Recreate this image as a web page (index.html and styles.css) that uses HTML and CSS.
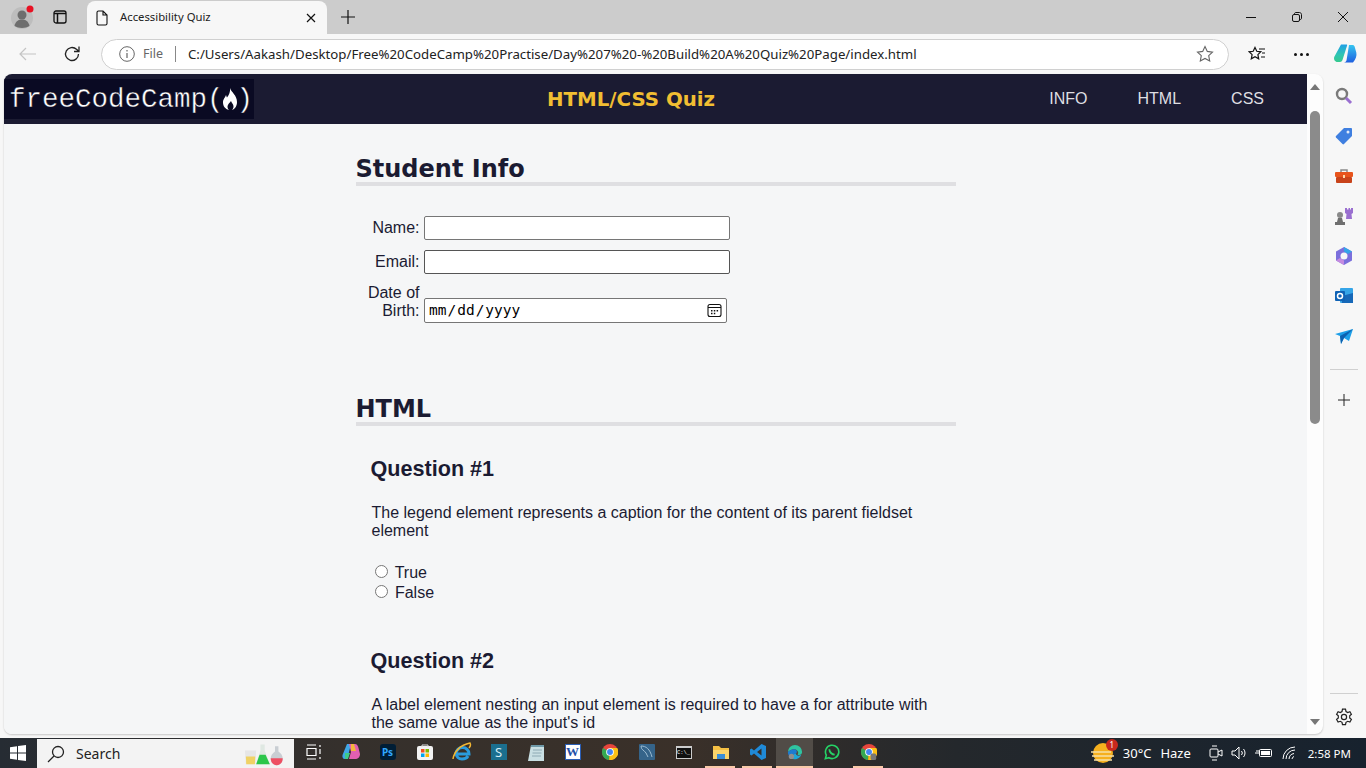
FILE: index.html
```html
<!DOCTYPE html>
<html lang="en">
<head>
    <meta charset="UTF-8">
    <title>Accessibility Quiz</title>
    <link rel="stylesheet" href="styles.css">
</head>
<body>
    <!-- tab strip -->
    <div class="tabstrip">
        <div class="profile">
            <svg width="26" height="26" viewBox="0 0 26 26"><circle cx="11" cy="14" r="11" fill="#bdbdbd"/><circle cx="11" cy="11" r="4.500" fill="#6e6e6e"/><path d="M3.500 22c1-5 4-6.500 7.500-6.500s6.500 1.500 7.500 6.500c-4 2.500-11 2.500-15 0z" fill="#6e6e6e"/><circle cx="19" cy="5" r="3.500" fill="#e81123"/></svg>
        </div>
        <div class="tab-actions">
            <svg width="14" height="14" viewBox="0 0 14 14" fill="none" stroke="#111" stroke-width="1.300"><rect x="1" y="1" width="12" height="12" rx="2"/><path d="M1 3.500h12M4.500 3.500V13" stroke-width="1.500"/></svg>
        </div>
        <div class="tab">
            <svg width="12" height="16" viewBox="0 0 12 16" fill="none" stroke="#111" stroke-width="1.100"><path d="M1 2.500c0-1 .5-1.500 1.500-1.500H7l4 4v8.500c0 1-.5 1.500-1.500 1.500h-7c-1 0-1.500-.5-1.500-1.500zM7 1v4h4"/></svg>
            <span class="tab-title">Accessibility Quiz</span>
            <svg class="tab-close" width="10" height="10" viewBox="0 0 10 10" stroke="#111" stroke-width="1.200"><path d="M1 1l8 8M9 1l-8 8"/></svg>
        </div>
        <svg class="new-tab" width="14" height="14" viewBox="0 0 14 14" stroke="#111" stroke-width="1.200"><path d="M7 0v14M0 7h14"/></svg>
        <div class="window-controls">
            <svg width="10" height="10" viewBox="0 0 10 10" stroke="#111"><path d="M0 5.500h10"/></svg>
            <svg width="10" height="10" viewBox="0 0 10 10" fill="none" stroke="#111"><rect x=".5" y="2.500" width="7" height="7" rx="1.500"/><path d="M2.500 2.500V2c0-1 .5-1.500 1.500-1.500h3.500c1 0 2 1 2 2V6c0 1-.5 1.500-1.500 1.500"/></svg>
            <svg width="10" height="10" viewBox="0 0 10 10" stroke="#111"><path d="M0 0l10 10M10 0L0 10"/></svg>
        </div>
    </div>

    <!-- address bar -->
    <div class="toolbar">
        <svg class="tool-back" width="18" height="14" viewBox="0 0 18 14" fill="none" stroke="#c4c4c4" stroke-width="1.200"><path d="M17 7H1M7 1L1 7l6 6"/></svg>
        <svg class="tool-reload" width="18" height="18" viewBox="0 0 18 18" fill="none" stroke="#222" stroke-width="1.300"><path d="M15.500 9a6.500 6.500 0 1 1-2-4.700L16 6.500M16 1.500v5h-5"/></svg>
        <div class="address">
            <svg width="16" height="16" viewBox="0 0 16 16" fill="none" stroke="#666"><circle cx="8" cy="8" r="7.300"/><path d="M8 7v5M8 4v1.500" stroke-width="1.200"/></svg>
            <span class="address-file">File</span>
            <span class="address-url">C:/Users/Aakash/Desktop/Free%20CodeCamp%20Practise/Day%207%20-%20Build%20A%20Quiz%20Page/index.html</span>
            <svg class="address-star" width="18" height="18" viewBox="0 0 18 18" fill="none" stroke="#666" stroke-width="1.100"><path d="M9 1.500l2.300 4.900 5.200.7-3.800 3.600 1 5.300L9 13.400l-4.700 2.600 1-5.300L1.500 7.100l5.200-.7z"/></svg>
        </div>
        <svg class="tool-fav" width="18" height="16" viewBox="0 0 18 16" fill="none" stroke="#111" stroke-width="1.200"><path d="M7 1.500l1.800 3.800 4 .5-2.900 2.800.8 4.200L7 10.800l-3.700 2 .8-4.200L1.200 5.800l4-.5zM11 3h6M14 7h3M13 11h4"/></svg>
        <div class="tool-dots"><i></i><i></i><i></i></div>
        <svg class="tool-copilot" width="24" height="24" viewBox="0 0 24 24"><defs><linearGradient id="cpa" x1="0" y1="0" x2="0" y2="1"><stop offset="0" stop-color="#1f9fe6"/><stop offset=".6" stop-color="#2fc6b0"/><stop offset="1" stop-color="#36c98e"/></linearGradient><linearGradient id="cpb" x1="0" y1="0" x2="0" y2="1"><stop offset="0" stop-color="#35c5f0"/><stop offset="1" stop-color="#1f5fe0"/></linearGradient></defs><path d="M8 2.500h5.500c.5 0 .8.4.6 1L9.500 18c-.4 1.300-1.500 2-2.500 2H4.500C2 20 .5 17.500 1.200 15z" fill="url(#cpa)"/><path d="M16 3h3.500c1 0 1.800.7 2.100 1.500l1.700 6c.7 3-.5 7-3.300 10H11c1 0 2-.7 2.500-2z" fill="url(#cpb)"/></svg>
    </div>

    <div class="browser-main">
        <div class="page-frame">
            <div class="page">
                <header class="quiz-header">
                    <div class="logo">
                        <span>freeCodeCamp(</span>
                        <svg width="16" height="24" viewBox="0 0 16 24"><path d="M8 1c1 4 7 7 7 14 0 4-2 7-5 8 1.500-1.500 2-3.500 1-5.500-.5-1-1.500-2-2-3.500-1 1.500-3.500 3.500-3.500 5.500 0 1.500.5 2.500 1.500 3.500C3 22 1 19 1 15.500 1 12 3 11 4 8c.5 1 .5 2 1 2.500C7 8 8.500 5 8 1z" fill="#fff"/></svg>
                        <span class="logo-close">)</span>
                    </div>
                    <h1 class="quiz-title">HTML/CSS Quiz</h1>
                    <nav class="quiz-nav">
                        <a>INFO</a>
                        <a>HTML</a>
                        <a>CSS</a>
                    </nav>
                </header>

                <main class="quiz">
                    <section class="student-info">
                        <h2>Student Info</h2>
                        <div class="info-rows">
                            <div class="info-row"><label>Name:</label> <input type="text" class="text-input"></div>
                            <div class="info-row"><label>Email:</label> <input type="text" class="text-input dark"></div>
                            <div class="info-row"><label>Date of Birth:</label> <input type="date" class="date-input"></div>
                        </div>
                    </section>

                    <section class="html-section">
                        <h2>HTML</h2>
                        <div class="question">
                            <h3>Question #1</h3>
                            <p>The legend element represents a caption for the content of its parent fieldset element</p>
                            <div class="answers">
                                <label><input type="radio" name="q1"> True</label>
                                <label><input type="radio" name="q1"> False</label>
                            </div>
                        </div>
                        <div class="question">
                            <h3>Question #2</h3>
                            <p>A label element nesting an input element is required to have a for attribute with the same value as the input's id</p>
                        </div>
                    </section>
                </main>
            </div>
            <div class="scrollbar">
                <span class="arrow-up"></span>
                <span class="thumb"></span>
                <span class="arrow-down"></span>
            </div>
        </div>

        <!-- edge sidebar -->
        <aside class="sidebar">
            <div class="side-icon"><svg width="18" height="18" viewBox="0 0 18 18" fill="none"><circle cx="7" cy="7" r="5" stroke="#7a7a7a" stroke-width="2.400"/><path d="M11 11l5 5" stroke="#9a6fd0" stroke-width="3"/></svg></div>
            <div class="side-icon"><svg width="18" height="18" viewBox="0 0 18 18"><path d="M1 9l8-8h7c.5 0 1 .5 1 1v7l-8 8c-.5.500-1 .5-1.500 0L1 10.500C.5 10 .5 9.500 1 9z" fill="#3f7fe0"/><circle cx="13" cy="5" r="1.500" fill="#dfe9fa"/></svg></div>
            <div class="side-icon"><svg width="18" height="16" viewBox="0 0 18 16"><path d="M6 4V2h6v2" fill="none" stroke="#8a8a8a" stroke-width="1.500"/><rect x="0" y="4" width="18" height="5" rx="1" fill="#e8541c"/><rect x="1" y="9" width="16" height="6" rx="1" fill="#c8431a"/><rect x="8" y="7" width="2" height="3" fill="#ffd9a8"/></svg></div>
            <div class="side-icon"><svg width="20" height="20" viewBox="0 0 20 20"><circle cx="6" cy="9" r="3" fill="#8a8a8a"/><path d="M4 12h4l1 4H3zM1 16h10v3H1z" fill="#6f6f6f"/><path d="M11 2h2v1.500h1.500V2h1.500v1.500h1V2H19v5l-1.500 1 .5 5h-6l.5-5L11 7z" fill="#9a6fd0"/></svg></div>
            <div class="side-icon"><svg width="18" height="20" viewBox="0 0 18 20"><path d="M9 1l8 4.500v9L9 19l-8-4.500v-9z" fill="#7b6fdc"/><path d="M9 1l8 4.500-4 2.500-4-2.500z" fill="#35a5e8"/><path d="M1 14.500l4-2.500 4 2.500L9 19z" fill="#c58be0"/><circle cx="9" cy="10" r="3.500" fill="#f7f7f7"/></svg></div>
            <div class="side-icon"><svg width="18" height="18" viewBox="0 0 18 18"><rect x="5" y="1" width="13" height="15" rx="1" fill="#35a5e8"/><path d="M7 9l11-3v10H7z" fill="#1668b8"/><rect x="0" y="4" width="10" height="10" rx="1" fill="#0f62b5"/><circle cx="5" cy="9" r="2.500" fill="none" stroke="#fff" stroke-width="1.500"/></svg></div>
            <div class="side-icon"><svg width="18" height="15" viewBox="0 0 18 15"><path d="M0 5l18-5-4 12-5-3-3 6-1-8z" fill="#1d9fe8"/><path d="M5 7l13-7-9 9-3 6z" fill="#0d62b0"/></svg></div>
            <div class="side-rule"></div>
            <div class="side-icon add"><svg width="12" height="12" viewBox="0 0 12 12" stroke="#222"><path d="M6 0v12M0 6h12"/></svg></div>
            <div class="side-bottom">
                <div class="side-rule"></div>
                <svg width="18" height="18" viewBox="0 0 18 18" fill="none" stroke="#222" stroke-width="1.200"><circle cx="9" cy="9" r="2.600"/><path d="M7.500 1.200h3l.5 2.300 1.700 1 2.200-.8 1.500 2.600-1.700 1.500v2.200l1.700 1.500-1.500 2.600-2.200-.8-1.700 1-.5 2.300h-3l-.5-2.300-1.700-1-2.200.8-1.500-2.600 1.700-1.500V7.800L1.600 6.300l1.500-2.600 2.200.8 1.700-1z"/></svg>
            </div>
        </aside>
    </div>

    <!-- windows taskbar -->
    <footer class="taskbar">
        <div class="start">
            <svg width="16" height="16" viewBox="0 0 16 16" fill="#fff"><path d="M0 2.200l7-1v6.300H0zM8 1l8-1v7.500H8zM0 8.500h7v6.300l-7-1zM8 8.500h8V16l-8-1z"/></svg>
        </div>
        <div class="search-box">
            <svg width="18" height="18" viewBox="0 0 18 18" fill="none" stroke="#222" stroke-width="1.300"><circle cx="11" cy="7" r="5.500"/><path d="M7 11l-6 6"/></svg>
            <span>Search</span>
            <svg class="flasks" width="46" height="24" viewBox="0 0 46 28"><path d="M2 10h13l-1 16H3z" fill="#e6e6e6"/><path d="M3 17h11l-.5 9H3.500z" fill="#f0d264"/><path d="M20 3h5v7l6 16H15l5-16z" fill="#dfe8e2"/><path d="M19 15h7l5 11H15z" fill="#2cc64a"/><path d="M37 5h4v6c3 2 5 5 5 8 0 5-3 8-7 8s-7-3-7-8c0-3 2-6 5-8z" fill="#c9ced3"/><path d="M32 19h14c0 5-3 8-7 8s-7-3-7-8z" fill="#ee4f63"/></svg>
        </div>
        <div class="task-icons">
            <div class="task-icon"><svg width="16" height="16" viewBox="0 0 16 16" fill="none" stroke="#fff" stroke-width="1.200"><path d="M1 1h9M1 4.500h9v7H1zM1 15h9M14 1v2M14 5v5M14 13v2"/></svg></div>
            <div class="task-icon"><svg width="18" height="18" viewBox="0 0 18 18"><path d="M5 1h4L6 13c-.5 2-2 3-3.500 3C1 16 0 14 .5 12z" fill="#3fa7e8"/><path d="M7 1h6c2 0 3 2 3.500 4L18 11c0 3-2 5-5 5H7l2-7z" fill="#e25fb0"/><path d="M9 1h3l2 7H9z" fill="#f5b53d"/><path d="M3 10h5l-2 6H3z" fill="#3ecb8a"/></svg></div>
            <div class="task-icon"><div class="ps-tile">Ps</div></div>
            <div class="task-icon"><svg width="16" height="16" viewBox="0 0 16 16"><rect y="2" width="16" height="14" rx="2" fill="#f2f2f2"/><path d="M5 3V1h6v2" fill="none" stroke="#ddd"/><rect x="4" y="5" width="3.500" height="3.500" fill="#f25022"/><rect x="8.500" y="5" width="3.500" height="3.500" fill="#7fba00"/><rect x="4" y="9.500" width="3.500" height="3.500" fill="#00a4ef"/><rect x="8.500" y="9.500" width="3.500" height="3.500" fill="#ffb900"/></svg></div>
            <div class="task-icon"><svg width="20" height="20" viewBox="0 0 20 20"><path d="M4 12a6.500 6.500 0 0 1 13 0H4zM4 10c0 5 3 7 6 7 3 0 5-1 6-3" fill="none" stroke="#2a9bdd" stroke-width="3"/><path d="M1 17C2 10 8 3 18 1c1 2 0 4-1 5" fill="none" stroke="#f3b632" stroke-width="1.500"/></svg></div>
            <div class="task-icon"><div class="s-tile">S</div></div>
            <div class="task-icon"><svg width="16" height="18" viewBox="0 0 16 18"><path d="M3 2h13v16H0z" fill="#c9dfe3"/><path d="M3 2h13v2H3z" fill="#6f99a8"/><path d="M5 7h9M4.500 10h9M4 13h9" stroke="#8eaab4"/></svg></div>
            <div class="task-icon"><div class="word-tile">W</div></div>
            <div class="task-icon"><svg width="16" height="16" viewBox="0 0 20 20"><circle cx="10" cy="10" r="10" fill="#e8453c"/><path d="M10 10L1.300 5a10 10 0 0 0 7.700 15z" fill="#34a853"/><path d="M10 5h9a10 10 0 0 1-10 15z" fill="#fbc116"/><circle cx="10" cy="10" r="4.800" fill="#fff"/><circle cx="10" cy="10" r="3.700" fill="#4285f4"/></svg></div>
            <div class="task-icon"><svg width="16" height="16" viewBox="0 0 16 16"><rect width="16" height="16" rx="1" fill="#35648a"/><path d="M2 2c5 0 9 3 11 11M2 2c0 4 3 4 5 7 1 1 1 3 2 4" fill="none" stroke="#9cbbd1"/></svg></div>
            <div class="task-icon"><div class="cmd-tile">C:\_</div></div>
            <div class="task-icon"><svg width="16" height="14" viewBox="0 0 16 14"><path d="M0 1h6l2 2h8v11H0z" fill="#f5c044"/><path d="M0 5h16v9H0z" fill="#fbd56b"/><rect x="4" y="9" width="8" height="5" fill="#3a8fd8"/></svg></div>
            <div class="task-icon"><svg width="16" height="16" viewBox="0 0 16 16"><path d="M11.500 0L16 2v12l-4.500 2L4 9.500 1.500 11.500 0 10.500V5.500l1.500-1L4 6.500zM11.500 4.500L7 8l4.500 3.500z" fill="#1f8ad8" fill-rule="evenodd"/></svg></div>
            <div class="task-icon active"><svg width="16" height="16" viewBox="0 0 18 18"><path d="M1 9a8 8 0 0 1 16 0c0 3-3 4-5 3 2-3-1-6-4-6-3 0-6 2-7 3z" fill="#2fc4a0"/><path d="M1 9c1-1 4-3 7-3 3 0 4 3 2 5-2 0-5 2-3 6-3-1-6-4-6-8z" fill="#1d7bd0"/><path d="M7 17c-2-4 1-6 3-6 0 2 3 3 6 1-1 3-5 6-9 5z" fill="#1da7d8"/><circle cx="5" cy="14" r="3" fill="#8f8f8f"/></svg></div>
            <div class="task-icon"><svg width="16" height="16" viewBox="0 0 18 18" fill="none" stroke="#25d366" stroke-width="1.800"><path d="M1.500 16.500l1.100-4A7.500 7.500 0 1 1 5.500 15.400z"/><path d="M6 6c0 3 3 6 6 6" stroke-width="2"/></svg></div>
            <div class="task-icon"><svg width="16" height="16" viewBox="0 0 20 20"><circle cx="10" cy="10" r="10" fill="#e8453c"/><path d="M10 10L1.300 5a10 10 0 0 0 7.700 15z" fill="#34a853"/><path d="M10 5h9a10 10 0 0 1-10 15z" fill="#fbc116"/><circle cx="10" cy="10" r="4.800" fill="#fff"/><circle cx="10" cy="10" r="3.700" fill="#4285f4"/><rect x="12" y="12" width="7" height="8" rx="2" fill="#777"/></svg></div>
        </div>
        <div class="tray">
            <div class="weather-icon">
                <svg width="24" height="22" viewBox="0 0 24 22"><circle cx="12" cy="11" r="10" fill="#f6b01e"/><path d="M0 10h20M1 14h22M3 18h18" stroke="#f6dfa6" stroke-width="1.500"/></svg>
                <span class="weather-badge">1</span>
            </div>
            <span class="weather-temp">30°C</span>
            <span class="weather-text">Haze</span>
            <svg class="tray-icon cam" width="14" height="18" viewBox="0 0 14 18" fill="none" stroke="#fff"><rect x="1" y="5" width="8" height="8" rx="1"/><path d="M9 8l4-2v6l-4-2M3 2h5M3 16h5"/></svg>
            <svg class="tray-icon" width="16" height="14" viewBox="0 0 16 14" fill="none" stroke="#fff"><path d="M1 5h3l4-4v12L4 9H1zM10.500 5a3 3 0 0 1 0 4M12.500 3a6 6 0 0 1 0 8"/></svg>
            <svg class="tray-icon" width="18" height="10" viewBox="0 0 18 10" fill="none" stroke="#fff"><rect x="4.500" y="1.500" width="12" height="7" rx="1"/><rect x="6" y="3" width="9" height="4" fill="#fff" stroke="none"/><path d="M0 5h4M2 2v2M4 2v2"/></svg>
            <svg class="tray-icon wifi" width="14" height="14" viewBox="0 0 14 14" fill="none" stroke="#fff"><path d="M1 13A12 12 0 0 1 13 1M4 13a9 9 0 0 1 9-9M7 13a6 6 0 0 1 5-5.500M10 13a3 3 0 0 1 2-2.500"/></svg>
            <span class="clock">2:58 PM</span>
        </div>
    </footer>
</body>
</html>
```

FILE: styles.css
```css
* {
    box-sizing: border-box;
}

html,
body {
    margin: 0;
    height: 768px;
    overflow: hidden;
}

body {
    display: flex;
    flex-direction: column;
    font-family: "Liberation Sans", Arial, sans-serif;
    font-size: 16px;
    color: #1b1b32;
    background-color: #f7f7f7;
}

/* tab strip */
.tabstrip {
    display: flex;
    align-items: center;
    height: 34px;
    flex: none;
    background-color: #cccccc;
    font-family: "Noto Sans", sans-serif;
}

.profile {
    display: flex;
    width: 46px;
    padding-left: 11px;
    margin-top: -1px;
}

.tab-actions {
    display: flex;
    justify-content: center;
    width: 28px;
    margin-right: 13px;
}

.tab {
    display: flex;
    align-items: center;
    align-self: flex-end;
    width: 240px;
    height: 33px;
    padding: 0 11px 0 9px;
    background-color: #f7f7f7;
    border-radius: 8px 8px 0 0;
}

.tab-title {
    margin-left: 12px;
    padding-bottom: 2px;
    font-size: 11.300px;
    color: #222;
}

.tab-close {
    margin-left: auto;
}

.new-tab {
    margin-left: 14px;
}

.window-controls {
    display: flex;
    gap: 36px;
    margin-left: auto;
    padding-right: 18px;
}

/* toolbar */
.toolbar {
    display: flex;
    align-items: center;
    height: 40px;
    flex: none;
    background-color: #f7f7f7;
    font-family: "Noto Sans", sans-serif;
}

.tool-back {
    margin-left: 19px;
}

.tool-reload {
    margin-left: 26px;
}

.address {
    display: flex;
    align-items: center;
    width: 1128px;
    height: 31px;
    margin-left: 20px;
    padding-left: 17px;
    background-color: #fff;
    border: 1px solid #d0d0d0;
    border-radius: 16px;
    font-size: 12.500px;
}

.address-file {
    margin-left: 8px;
    padding-right: 12px;
    color: #666;
    line-height: 16px;
    border-right: 1px solid #888;
}

.address-url {
    margin-left: 12px;
    color: #222;
    font-size: 13.250px;
    white-space: nowrap;
}

.address-star {
    margin-left: auto;
    margin-right: 14px;
}

.tool-fav {
    margin-left: 19px;
}

.tool-dots {
    display: flex;
    gap: 3px;
    margin-left: 28px;
}

.tool-dots i {
    width: 3px;
    height: 3px;
    border-radius: 50%;
    background-color: #111;
}

.tool-copilot {
    margin-left: 24px;
}

/* page area */
.browser-main {
    display: flex;
    height: 664px;
    flex: none;
}

.page-frame {
    display: flex;
    width: 1319px;
    height: 660px;
    margin-left: 4px;
    background-color: #fdfdfd;
    border-radius: 8px;
    box-shadow: 0 1px 2px rgba(0, 0, 0, 0.2);
    overflow: hidden;
}

.page {
    width: 1303px;
    height: 660px;
    overflow: hidden;
    background-color: #f5f6f7;
}

.quiz-header {
    display: flex;
    align-items: center;
    height: 50px;
    background-color: #1b1b32;
}

.logo {
    display: flex;
    flex: none;
    align-items: center;
    width: 250px;
    height: 40px;
    padding-left: 5px;
    background-color: #0a0a23;
    font-family: "Liberation Mono", monospace;
    font-size: 27.500px;
    color: #fff;
    -webkit-text-stroke: 0.4px #0a0a23;
}

.logo svg {
    flex: none;
    margin-left: -2px;
}

.logo-close {
    margin-left: -1px;
}

.quiz-title {
    margin: 0 0 0 293px;
    font-family: "DejaVu Sans", sans-serif;
    font-size: 19.800px;
    color: #f1be32;
}

.quiz-nav {
    display: flex;
    gap: 50px;
    margin-left: auto;
    padding-right: 43px;
    color: #dfdfe2;
}

.quiz {
    width: 600px;
    margin: 0 auto;
    padding-top: 26px;
}

h2 {
    margin: 0;
    height: 36px;
    font-family: "DejaVu Sans", sans-serif;
    font-size: 24px;
    line-height: 39px;
    border-bottom: 4px solid #dfdfe2;
}

.info-rows {
    padding: 30px 0 0 4px;
    height: 204px;
}

.info-row {
    margin-bottom: 10px;
}

.info-row label {
    display: inline-block;
    width: 60px;
    text-align: right;
}

.text-input {
    width: 306px;
    height: 24px;
    border: 1px solid #767676;
    border-radius: 2px;
    background-color: #fff;
}

.text-input.dark {
    border-color: #555;
}

.date-input {
    width: 303px;
    height: 25px;
    padding: 1px 3px;
    border: 1px solid #767676;
    border-radius: 2px;
    background-color: #fff;
    font-family: "DejaVu Sans Mono", monospace;
    font-size: 14.500px;
    vertical-align: 1px;
}

.date-input::-webkit-calendar-picker-indicator {
    width: 15px;
    height: 15px;
    padding: 0;
    margin-right: 1px;
    background-image: url("data:image/svg+xml,%3Csvg xmlns='http://www.w3.org/2000/svg' width='15' height='15' viewBox='0 0 15 15'%3E%3Crect x='1' y='1.500' width='13' height='12' rx='2' fill='none' stroke='%23111' stroke-width='1.100'/%3E%3Cpath d='M1 4.500h13' stroke='%23111' stroke-width='1.100'/%3E%3Cpath d='M4 7h1.500v1.500H4zM6.800 7h1.500v1.500H6.800zM9.600 7h1.500v1.500H9.600zM4 9.800h1.500v1.500H4zM6.800 9.800h1.500v1.500H6.800z' fill='%23111'/%3E%3C/svg%3E");
}

.question {
    padding: 30px 14px 0 15px;
}

h3 {
    margin: 0;
    font-size: 21.600px;
    line-height: 25px;
}

.question p {
    margin: 23px 0 0 1px;
    line-height: 18px;
}

.answers {
    margin: 22px 0 0 -1px;
    padding-bottom: 16px;
}

.answers label {
    display: block;
    height: 20px;
    line-height: 20px;
}

/* scrollbar */
.scrollbar {
    display: flex;
    flex-direction: column;
    align-items: center;
    width: 16px;
}

.thumb {
    width: 10px;
    height: 313px;
    margin-top: 21px;
    background-color: #8b8b8b;
    border-radius: 5px;
}

.arrow-up {
    margin-top: 10px;
    border-left: 5px solid transparent;
    border-right: 5px solid transparent;
    border-bottom: 6px solid #777;
}

.arrow-down {
    margin-top: auto;
    margin-bottom: 9px;
    border-left: 5px solid transparent;
    border-right: 5px solid transparent;
    border-top: 6px solid #777;
}

/* sidebar */
.sidebar {
    display: flex;
    flex-direction: column;
    align-items: center;
    width: 43px;
    padding: 2px 1px 0 0;
}

.side-icon {
    display: flex;
    align-items: center;
    justify-content: center;
    height: 40px;
}

.side-icon.add {
    margin-top: 10px;
}

.side-rule {
    flex: none;
    width: 28px;
    height: 1px;
    margin-top: 13px;
    background-color: #d0d0d0;
}

.side-bottom {
    display: flex;
    flex-direction: column;
    align-items: center;
    gap: 14px;
    margin-top: auto;
    padding-bottom: 12px;
}

.side-bottom .side-rule {
    margin-top: 0;
}

/* taskbar */
.taskbar {
    display: flex;
    align-items: center;
    height: 30px;
    flex: none;
    background: linear-gradient(90deg, #262c33 0%, #35302c 25%, #3a3029 50%, #24282c 70%, #17222e 100%);
    font-family: "Noto Sans", sans-serif;
    color: #fff;
}

.start {
    display: flex;
    justify-content: center;
    width: 37px;
    padding-right: 1px;
}

.search-box {
    display: flex;
    align-items: center;
    width: 257px;
    height: 29px;
    margin-top: 1px;
    padding-left: 10px;
    background-color: #f3f3f3;
    color: #222;
    font-size: 14px;
}

.search-box span {
    margin-left: 11px;
}

.flasks {
    margin-left: auto;
    margin-right: 8px;
}

.task-icons {
    display: flex;
    margin-left: 1px;
}

.task-icon {
    display: flex;
    align-items: center;
    justify-content: center;
    width: 37px;
    height: 30px;
    border-bottom: 2px solid transparent;
}

.task-icon:nth-child(12),
.task-icon:nth-child(13),
.task-icon:nth-child(16) {
    border-image: linear-gradient(90deg, transparent 4px, #f9c9a8 4px, #f9c9a8 32px, transparent 32px) 1;
}

.task-icon.active {
    background-color: #514c47;
    border-bottom-color: #f9c9a8;
}

.ps-tile {
    width: 16px;
    height: 16px;
    border-radius: 3px;
    background-color: #001e36;
    color: #31a8ff;
    font-size: 10px;
    font-weight: 700;
    line-height: 16px;
    text-align: center;
}

.s-tile {
    width: 16px;
    height: 16px;
    background-color: #1b6f8f;
    color: #d6eef5;
    font-size: 13px;
    line-height: 16px;
    text-align: center;
}

.word-tile {
    width: 16px;
    height: 16px;
    background-color: #fff;
    border: 1px solid #2b5eb5;
    color: #1f51a8;
    font-family: "Liberation Serif", serif;
    font-size: 13px;
    font-weight: 700;
    line-height: 14px;
    text-align: center;
}

.cmd-tile {
    width: 16px;
    height: 13px;
    background-color: #111;
    border: 1px solid #ccc;
    border-top-width: 2px;
    font-family: "Liberation Mono", monospace;
    font-size: 5.500px;
    line-height: 9px;
    text-align: center;
}

.tray {
    display: flex;
    align-items: center;
    margin-left: auto;
    padding-right: 15px;
    font-size: 13px;
}

.weather-icon {
    position: relative;
    display: flex;
    margin-right: 8px;
}

.weather-badge {
    position: absolute;
    top: -3px;
    right: -3px;
    width: 12px;
    height: 12px;
    border-radius: 50%;
    background-color: #c8281e;
    font-size: 8px;
    line-height: 12px;
    text-align: center;
}

.weather-text {
    margin-left: 9px;
}

.tray-icon {
    margin-left: 8px;
}

.tray-icon.cam {
    margin-left: 18px;
}

.tray-icon.wifi {
    margin-left: 9px;
}

.clock {
    margin-left: 12px;
    font-size: 11.500px;
}
```
